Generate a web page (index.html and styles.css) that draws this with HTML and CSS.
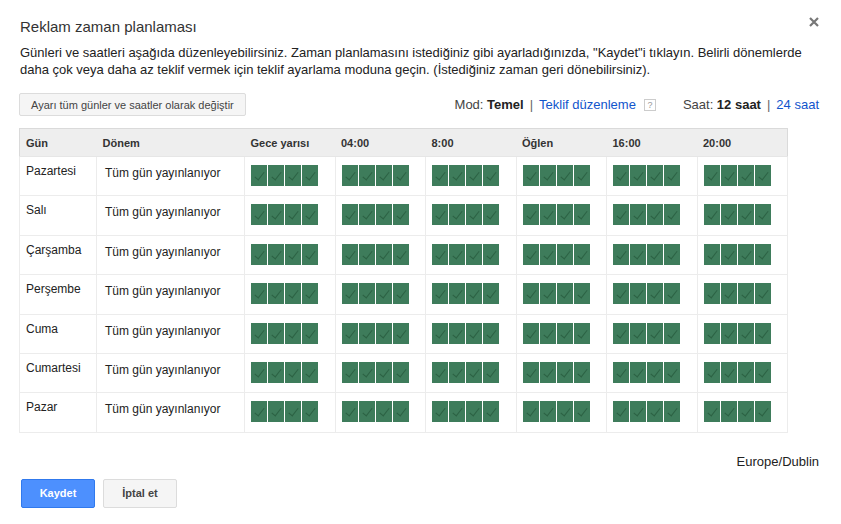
FILE: index.html
```html
<!DOCTYPE html>
<html lang="tr">

<head>
    <meta charset="UTF-8">
    <meta name="viewport" content="width=device-width, initial-scale=1.0">
    <title>Reklam zaman planlaması</title>
    <link rel="stylesheet" href="styles.css">
</head>

<body>
    <div class="dialog">
        <div class="dialog-head">
            <h1>Reklam zaman planlaması</h1>
            <button class="close-btn" type="button" aria-label="Kapat">
                <svg width="10" height="10" viewBox="0 0 10 10">
                    <path d="M1 1 L9 9 M9 1 L1 9" stroke="#777" stroke-width="2.2" />
                </svg>
            </button>
        </div>

        <p class="intro">Günleri ve saatleri aşağıda düzenleyebilirsiniz. Zaman planlamasını istediğiniz gibi ayarladığınızda, "Kaydet"i tıklayın. Belirli dönemlerde daha çok veya daha az teklif vermek için teklif ayarlama moduna geçin. (İstediğiniz zaman geri dönebilirsiniz).</p>

        <div class="toolbar">
            <button class="btn" type="button">Ayarı tüm günler ve saatler olarak değiştir</button>
            <div class="options">
                <span>Mod: <b>Temel</b></span>
                <span class="sep">|</span>
                <a href="#">Teklif düzenleme</a>
                <span class="help">?</span>
                <span class="hours">Saat: <b>12 saat</b></span>
                <span class="sep">|</span>
                <a href="#">24 saat</a>
            </div>
        </div>

        <table class="schedule">
            <colgroup>
                <col class="col-day">
                <col class="col-period">
                <col>
                <col>
                <col>
                <col>
                <col>
                <col>
            </colgroup>
            <thead>
                <tr>
                    <th>Gün</th>
                    <th>Dönem</th>
                    <th>Gece yarısı</th>
                    <th>04:00</th>
                    <th>8:00</th>
                    <th>Öğlen</th>
                    <th>16:00</th>
                    <th>20:00</th>
                </tr>
            </thead>
            <tbody>
                <tr>
                    <td>Pazartesi</td>
                    <td class="period">Tüm gün yayınlanıyor</td>
                    <td><div class="slots"><i></i><i></i><i></i><i></i></div></td>
                    <td><div class="slots"><i></i><i></i><i></i><i></i></div></td>
                    <td><div class="slots"><i></i><i></i><i></i><i></i></div></td>
                    <td><div class="slots"><i></i><i></i><i></i><i></i></div></td>
                    <td><div class="slots"><i></i><i></i><i></i><i></i></div></td>
                    <td><div class="slots"><i></i><i></i><i></i><i></i></div></td>
                </tr>
                <tr>
                    <td>Salı</td>
                    <td class="period">Tüm gün yayınlanıyor</td>
                    <td><div class="slots"><i></i><i></i><i></i><i></i></div></td>
                    <td><div class="slots"><i></i><i></i><i></i><i></i></div></td>
                    <td><div class="slots"><i></i><i></i><i></i><i></i></div></td>
                    <td><div class="slots"><i></i><i></i><i></i><i></i></div></td>
                    <td><div class="slots"><i></i><i></i><i></i><i></i></div></td>
                    <td><div class="slots"><i></i><i></i><i></i><i></i></div></td>
                </tr>
                <tr>
                    <td>Çarşamba</td>
                    <td class="period">Tüm gün yayınlanıyor</td>
                    <td><div class="slots"><i></i><i></i><i></i><i></i></div></td>
                    <td><div class="slots"><i></i><i></i><i></i><i></i></div></td>
                    <td><div class="slots"><i></i><i></i><i></i><i></i></div></td>
                    <td><div class="slots"><i></i><i></i><i></i><i></i></div></td>
                    <td><div class="slots"><i></i><i></i><i></i><i></i></div></td>
                    <td><div class="slots"><i></i><i></i><i></i><i></i></div></td>
                </tr>
                <tr>
                    <td>Perşembe</td>
                    <td class="period">Tüm gün yayınlanıyor</td>
                    <td><div class="slots"><i></i><i></i><i></i><i></i></div></td>
                    <td><div class="slots"><i></i><i></i><i></i><i></i></div></td>
                    <td><div class="slots"><i></i><i></i><i></i><i></i></div></td>
                    <td><div class="slots"><i></i><i></i><i></i><i></i></div></td>
                    <td><div class="slots"><i></i><i></i><i></i><i></i></div></td>
                    <td><div class="slots"><i></i><i></i><i></i><i></i></div></td>
                </tr>
                <tr>
                    <td>Cuma</td>
                    <td class="period">Tüm gün yayınlanıyor</td>
                    <td><div class="slots"><i></i><i></i><i></i><i></i></div></td>
                    <td><div class="slots"><i></i><i></i><i></i><i></i></div></td>
                    <td><div class="slots"><i></i><i></i><i></i><i></i></div></td>
                    <td><div class="slots"><i></i><i></i><i></i><i></i></div></td>
                    <td><div class="slots"><i></i><i></i><i></i><i></i></div></td>
                    <td><div class="slots"><i></i><i></i><i></i><i></i></div></td>
                </tr>
                <tr>
                    <td>Cumartesi</td>
                    <td class="period">Tüm gün yayınlanıyor</td>
                    <td><div class="slots"><i></i><i></i><i></i><i></i></div></td>
                    <td><div class="slots"><i></i><i></i><i></i><i></i></div></td>
                    <td><div class="slots"><i></i><i></i><i></i><i></i></div></td>
                    <td><div class="slots"><i></i><i></i><i></i><i></i></div></td>
                    <td><div class="slots"><i></i><i></i><i></i><i></i></div></td>
                    <td><div class="slots"><i></i><i></i><i></i><i></i></div></td>
                </tr>
                <tr>
                    <td>Pazar</td>
                    <td class="period">Tüm gün yayınlanıyor</td>
                    <td><div class="slots"><i></i><i></i><i></i><i></i></div></td>
                    <td><div class="slots"><i></i><i></i><i></i><i></i></div></td>
                    <td><div class="slots"><i></i><i></i><i></i><i></i></div></td>
                    <td><div class="slots"><i></i><i></i><i></i><i></i></div></td>
                    <td><div class="slots"><i></i><i></i><i></i><i></i></div></td>
                    <td><div class="slots"><i></i><i></i><i></i><i></i></div></td>
                </tr>
            </tbody>
        </table>

        <div class="timezone">Europe/Dublin</div>

        <div class="actions">
            <button class="btn btn-primary" type="button">Kaydet</button>
            <button class="btn btn-cancel" type="button">İptal et</button>
        </div>
    </div>
</body>

</html>
```

FILE: styles.css
```css
body {
    margin: 0;
    padding: 0;
    background-color: #fff;
    font-family: "Liberation Sans", Arial, sans-serif;
    font-size: 13px;
    color: #222;
}

.dialog {
    width: 800px;
    padding: 17px 22px 0 19px;
}

.dialog-head {
    display: flex;
    justify-content: space-between;
    align-items: flex-start;
}

h1 {
    margin: 0;
    font-size: 15px;
    line-height: 20px;
    font-weight: normal;
    color: #333;
    padding-left: 1px;
}

.close-btn {
    border: none;
    background: none;
    padding: 0;
    width: 10px;
    height: 10px;
    line-height: 0;
    cursor: pointer;
}

.intro {
    margin: 7px 0 0 0;
    padding-left: 1px;
    line-height: 17px;
}

.toolbar {
    display: flex;
    justify-content: space-between;
    align-items: center;
    margin-top: 15px;
}

.btn {
    font-family: "Liberation Sans", Arial, sans-serif;
    font-size: 11px;
    height: 23px;
    padding: 0 11px;
    background-color: #f5f5f5;
    border: 1px solid #dcdcdc;
    border-radius: 2px;
    color: #444;
    cursor: pointer;
}

.options {
    display: flex;
    align-items: center;
    color: #444;
}

.options b {
    color: #222;
}

.options a {
    color: #15c;
    text-decoration: none;
}

.sep {
    margin: 0 6px;
    color: #666;
}

.help {
    display: inline-block;
    width: 10px;
    height: 10px;
    line-height: 10px;
    margin-left: 8px;
    border: 1px solid #ccc;
    font-size: 9px;
    color: #999;
    text-align: center;
}

.hours {
    margin-left: 27px;
}

.schedule {
    margin-top: 12px;
    width: 769px;
    border-collapse: collapse;
    table-layout: fixed;
    border: 1px solid #dadada;
    font-size: 12px;
}

.col-day {
    width: 77px;
}

.col-period {
    width: 148px;
}

.schedule th {
    background-color: #eee;
    height: 27px;
    padding: 0 6px;
    text-align: left;
    font-size: 11px;
    color: #333;
    border-bottom: 1px solid #e6e6e6;
}

.schedule td {
    height: 39.4px;
    padding: 7px 6px 0 6px;
    vertical-align: top;
    border: 1px solid #ececec;
    box-sizing: border-box;
}

.schedule td.period {
    padding-left: 8px;
    padding-top: 9px;
}

.slots {
    display: flex;
    gap: 1px;
    padding-top: 1px;
}

.slots i {
    position: relative;
    display: block;
    width: 16px;
    height: 21px;
    background-color: #3e7c5b;
}

.slots i::after {
    content: "";
    position: absolute;
    left: 6px;
    top: 5px;
    width: 4px;
    height: 9px;
    border-right: 1.5px solid #2c6244;
    border-bottom: 1.5px solid #2c6244;
    transform: rotate(38deg);
}

.timezone {
    margin-top: 20px;
    text-align: right;
    line-height: 17px;
}

.actions {
    display: flex;
    gap: 8px;
    margin-top: 9px;
    padding-left: 2px;
}

.actions .btn {
    height: 29px;
    width: 74px;
    font-weight: bold;
}

.btn-primary {
    background-color: #4d90fe;
    border-color: #3079ed;
    color: #fff;
}

.btn-cancel {
    color: #444;
}
```
